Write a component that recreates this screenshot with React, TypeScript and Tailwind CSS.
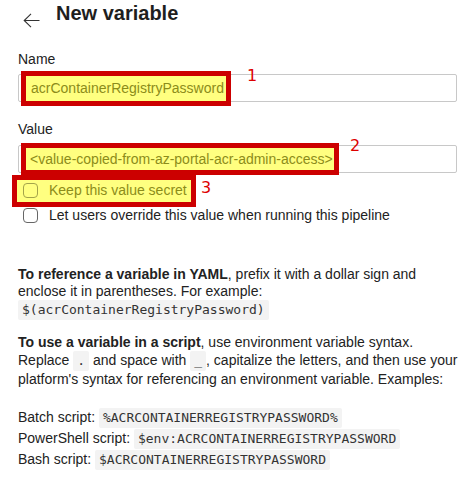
import React from 'react';

function Code({ children }: { children: React.ReactNode }) {
  return (
    <code className="inline-block px-1 py-[2px] text-[13px] leading-[16px] bg-[#f3f3f3] text-[#333] rounded-[2px] font-['DejaVu_Sans_Mono',monospace]">
      {children}
    </code>
  );
}

function Marker({ n, className }: { n: string; className: string }) {
  return (
    <span className={`absolute text-[16px] leading-[16px] text-[#dd0000] font-['DejaVu_Sans',sans-serif] ${className}`}>
      {n}
    </span>
  );
}

function Checkbox({ highlighted }: { highlighted?: boolean }) {
  return (
    <span
      className={`block w-[15px] h-[15px] rounded-[4px] border ${
        highlighted ? 'border-[#a3a34a]' : 'border-[#666]'
      }`}
    />
  );
}

export default function App() {
  return (
    <div className="w-[470px] h-[482px] overflow-hidden bg-white pl-[18px] pr-[13px] pt-[1px] text-[14px] leading-[17px] text-[#222] font-['Liberation_Sans',Arial,sans-serif]">
      {/* header */}
      <div className="flex items-start">
        <svg width="17" height="15" viewBox="0 0 17 15" className="ml-[5px] mt-[12px]" fill="none">
          <path d="M16.5 7.5H1.2M8 0.8L1.2 7.5L8 14.2" stroke="#333" strokeWidth="1.1" />
        </svg>
        <h1 className="ml-[16px] text-[20px] leading-[24px] font-bold text-[#1e1e1e]">New variable</h1>
      </div>

      {/* name */}
      <div className="mt-[23px]">Name</div>
      <div className="relative mt-[6px] h-[28px] border border-[#c8c8c8] rounded-[2px]">
        <span className="absolute left-[2px] top-[-4px] h-[35px] border-[5px] border-[#cc0000] bg-[#ffff80] flex items-center pl-[5px] pr-[2px] whitespace-nowrap text-[#8c8c1a]">
          acrContainerRegistryPassword
        </span>
        <Marker n="1" className="left-[228px] top-[-7px]" />
      </div>

      {/* value */}
      <div className="mt-[19px]">Value</div>
      <div className="relative mt-[7px] h-[28px] border border-[#c8c8c8] rounded-[2px]">
        <span className="absolute left-[2px] top-[-3px] h-[32px] border-[5px] border-[#cc0000] bg-[#ffff80] flex items-center pl-[4px] pr-[1px] whitespace-nowrap text-[#8c8c1a]">
          &lt;value-copied-from-az-portal-acr-admin-access&gt;
        </span>
        <Marker n="2" className="left-[331px] top-[-8px]" />
      </div>

      {/* checkboxes */}
      <div className="relative mt-[5px] h-[25px] flex items-center pl-[5px]">
        <span className="absolute left-[-6px] top-[-3px] w-[184px] h-[32px] border-[5px] border-[#cc0000] bg-[#ffff80]" />
        <span className="relative flex items-center gap-[11px] text-[#8c8c1a]">
          <Checkbox highlighted />
          Keep this value secret
        </span>
        <Marker n="3" className="left-[183px] top-[2px]" />
      </div>
      <div className="h-[25px] flex items-center gap-[11px] pl-[5px]">
        <Checkbox />
        Let users override this value when running this pipeline
      </div>

      {/* help text */}
      <div className="mr-[-8px]">
        <p className="mt-[38px]">
          <b>To reference a variable in YAML</b>, prefix it with a dollar sign and enclose it in parentheses. For
          example: <Code>$(acrContainerRegistryPassword)</Code>
        </p>

        <p className="mt-[14px]">
          <b>To use a variable in a script</b>, use environment variable syntax. Replace <Code>.</Code> and space
          with <Code>_</Code>, capitalize the letters, and then use your platform's syntax for referencing an
          environment variable. Examples:
        </p>

        <div className="mt-[19px] leading-[20px]">
          <div>
            Batch script: <Code>%ACRCONTAINERREGISTRYPASSWORD%</Code>
          </div>
          <div>
            PowerShell script: <Code>$env:ACRCONTAINERREGISTRYPASSWORD</Code>
          </div>
          <div>
            Bash script: <Code>$ACRCONTAINERREGISTRYPASSWORD</Code>
          </div>
        </div>
      </div>
    </div>
  );
}
